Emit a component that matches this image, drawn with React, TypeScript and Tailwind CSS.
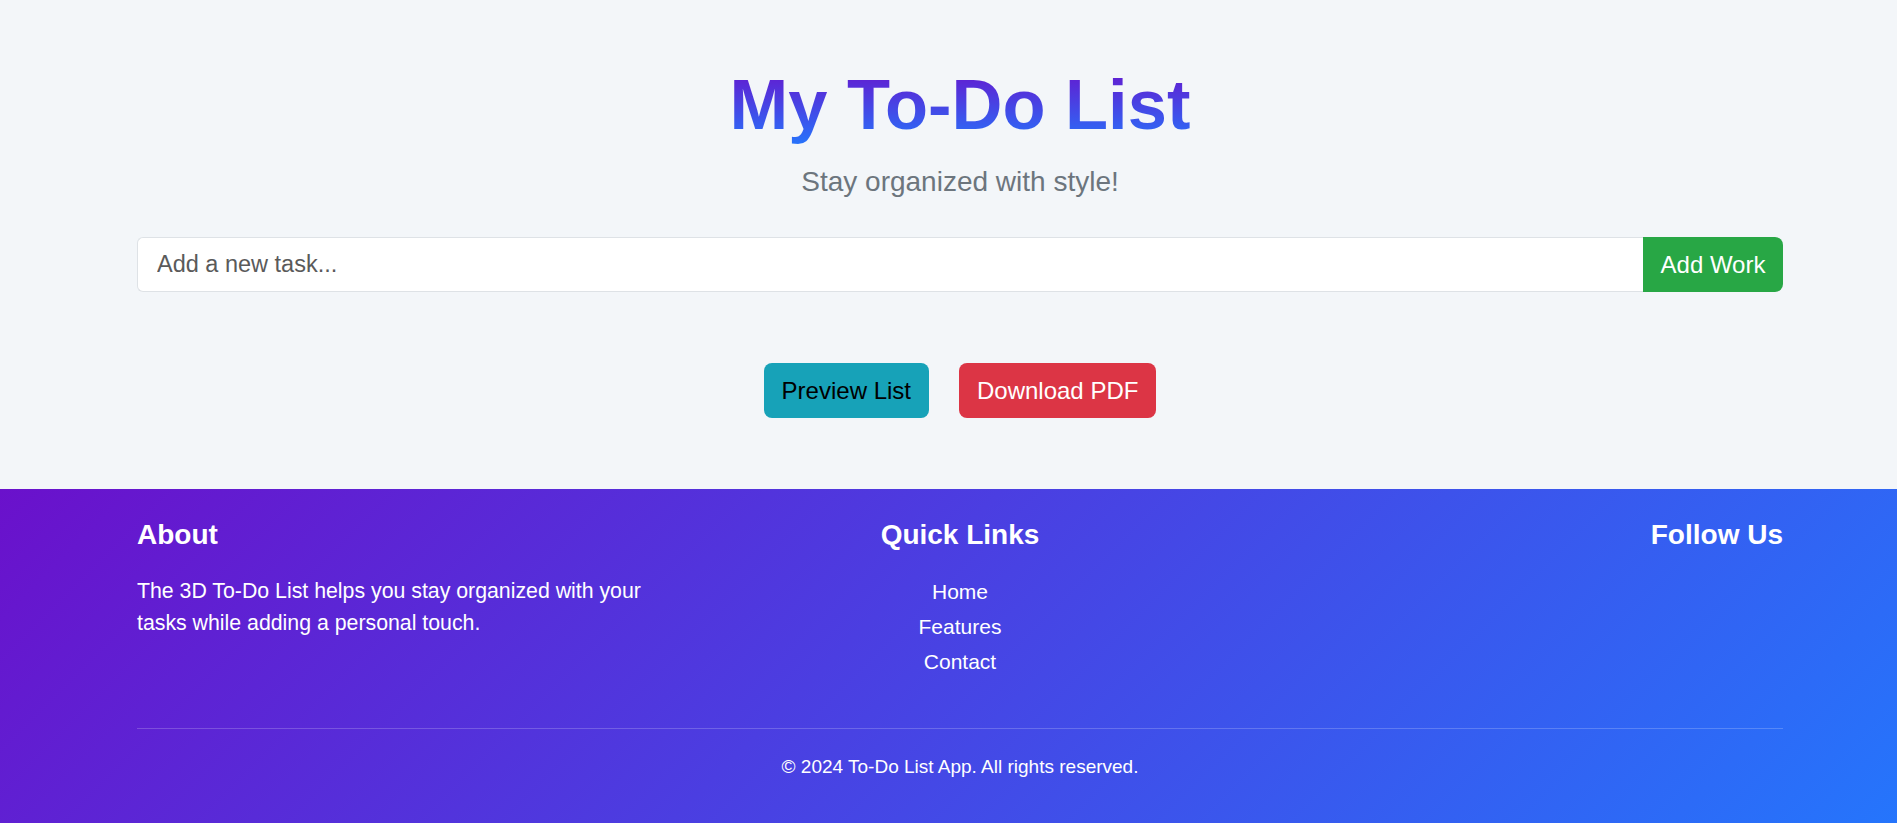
import React from "react";

export default function App() {
  return (
    <div
      className="min-h-screen bg-[#f3f6f9]"
      style={{ fontFamily: '"Liberation Sans", Arial, sans-serif' }}
    >
      <main className="pl-[137px] pr-[114px] pt-[63px] pb-[71px]">
        <div className="flex flex-col items-center">
          <h1 className="text-[70.5px] leading-[83px] font-bold">
            <span className="inline-block bg-[linear-gradient(to_bottom,#6a11cb,#2575fc)] bg-clip-text text-transparent">
              My To-Do List
            </span>
          </h1>
          <p className="mt-[20px] text-[28px] leading-[32px] text-[#6c757d]">
            Stay organized with style!
          </p>
        </div>

        <div className="mt-[39px] flex h-[55px] w-full">
          <input
            type="text"
            placeholder="Add a new task..."
            className="h-full flex-1 rounded-l-[6px] border border-r-0 border-[#dee2e6] bg-white pl-[19px] text-[23.5px] text-[#333] outline-none placeholder:text-[#5a5a5a]"
          />
          <button className="h-full w-[140px] rounded-r-[8px] bg-[#28a745] text-[24px] text-white">
            Add Work
          </button>
        </div>

        <div className="mt-[71px] flex justify-center gap-[30px]">
          <button className="h-[55px] rounded-[8px] bg-[#17a2b8] px-[18px] text-[24px] text-black">
            Preview List
          </button>
          <button className="h-[55px] rounded-[8px] bg-[#dc3545] px-[18px] text-[24px] text-white">
            Download PDF
          </button>
        </div>
      </main>

      <footer className="min-h-[334px] bg-[linear-gradient(135deg,#6a11cb,#2575fc)] pl-[137px] pr-[114px] pt-[30px] pb-[40px] text-white">
        <div className="grid grid-cols-3">
          <div>
            <h3 className="text-[28px] leading-[32px] font-bold">About</h3>
            <p className="mt-[25px] text-[21.3px] leading-[31.5px]">
              The 3D To-Do List helps you stay organized with your tasks while
              adding a personal touch.
            </p>
          </div>
          <div className="text-center">
            <h3 className="text-[28px] leading-[32px] font-bold">Quick Links</h3>
            <ul className="mt-[25px] flex flex-col gap-[3.5px] text-[21px] leading-[31.5px]">
              <li>
                <a href="#">Home</a>
              </li>
              <li>
                <a href="#">Features</a>
              </li>
              <li>
                <a href="#">Contact</a>
              </li>
            </ul>
          </div>
          <div className="text-right">
            <h3 className="text-[28px] leading-[32px] font-bold">Follow Us</h3>
          </div>
        </div>

        <div className="mt-[50px] border-t border-white/20 pt-[24px] text-center text-[19px] leading-[28px]">
          © 2024 To-Do List App. All rights reserved.
        </div>
      </footer>
    </div>
  );
}
